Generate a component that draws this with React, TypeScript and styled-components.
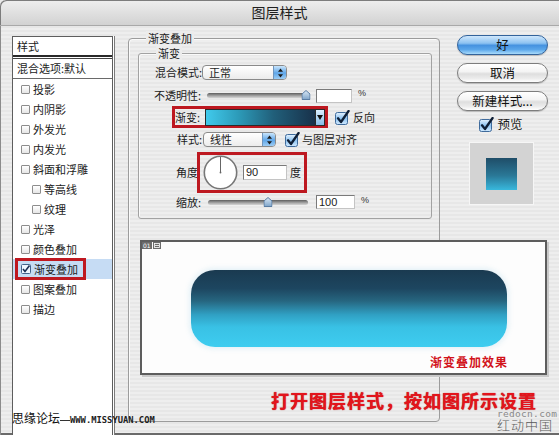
import React from "react";
import styled, { createGlobalStyle } from "styled-components";

const FONT = `"Noto Sans CJK SC", "Noto Sans", sans-serif`;

const Global = createGlobalStyle`
  html, body { margin: 0; padding: 0; background: #e9e9e9; }
  body { font-family: ${FONT}; }
  * { box-sizing: border-box; }
`;

const Window = styled.div`
  position: relative;
  width: 559px;
  height: 435px;
  overflow: hidden;
  display: flex;
  flex-direction: column;
  background: repeating-linear-gradient(to bottom, #eeeeee 0 2px, #e7e7e7 2px 4px);
  box-shadow: inset 1px 0 0 #8c8c8c, inset 0 -2px 0 #6a6a6a;
  border-top-left-radius: 6px;
  font-family: ${FONT};
  color: #1b1b1b;
  font-size: 11px;
  line-height: 1;
`;

const TitleBar = styled.div`
  height: 26px;
  flex: none;
  display: flex;
  align-items: center;
  justify-content: center;
  background: linear-gradient(#eeeeee, #d2d2d2);
  border-bottom: 1px solid #a9a9a9;
  border-top-left-radius: 6px;
  box-shadow: inset 1px 1px 0 #7c7c7c;
  font-size: 14px;
  color: #202020;
  padding-bottom: 1px;
`;

const Body = styled.div`
  flex: 1;
  display: flex;
  align-items: flex-start;
  padding: 10px 0 0 12px;
`;

/* ---------- left list ---------- */
const StyleList = styled.div`
  width: 101px;
  height: 420px;
  flex: none;
  background: #fff;
  border: 1px solid #5e5e5e;
  border-bottom: none;
  box-shadow: 1px 0 0 #fff, 2px 0 0 #7a7a7a;
  display: flex;
  flex-direction: column;
`;

const ListHeader = styled.div`
  height: 20px;
  padding-left: 4px;
  display: flex;
  align-items: center;
  border-bottom: 2px solid #2a2a2a;
  font-size: 11px;
`;

const ListBlend = styled.div`
  margin-top: 1px;
  height: 21px;
  padding-left: 4px;
  display: flex;
  align-items: center;
  border-top: 1px solid #444;
  border-bottom: 1px solid #6a6a6a;
`;

const ListItem = styled.div<{ $selected?: boolean; $indent?: boolean }>`
  height: 20px;
  display: flex;
  align-items: center;
  padding-left: ${(p) => (p.$indent ? 16 : 5)}px;
  background: ${(p) => (p.$selected ? "#c6dcf4" : "transparent")};
`;

const ItemInner = styled.span<{ $marked?: boolean }>`
  display: inline-flex;
  align-items: center;
  gap: 3px;
  height: 16px;
  padding: 0 5px 0 3px;
  outline: ${(p) => (p.$marked ? "3px solid #bf1820" : "none")};
`;

const SmallBox = styled.span`
  width: 9px;
  height: 9px;
  border: 1px solid #8d8d8d;
  border-radius: 1px;
  background: linear-gradient(#ffffff, #e6e6e6);
  display: inline-block;
`;

/* ---------- group boxes ---------- */
const OuterGroup = styled.div`
  position: relative;
  width: 312px;
  height: 384px;
  margin: 2px 0 0 15px;
  flex: none;
  border: 1px solid #9c9c9c;
  border-radius: 4px;
  box-shadow: inset 1px 1px 0 #fafafa;
  padding: 14px 0 0 9px;
`;

const InnerGroup = styled.div`
  position: relative;
  width: 294px;
  height: 166px;
  border: 1px solid #a2a2a2;
  border-radius: 3px;
  box-shadow: inset 1px 1px 0 #fafafa;
  display: flex;
  flex-direction: column;
`;

const Legend = styled.span<{ $left: number }>`
  position: absolute;
  top: -8px;
  left: ${(p) => p.$left}px;
  padding: 0 2px;
  background: #ececec;
  font-size: 11px;
  line-height: 14px;
`;

const Row = styled.div<{ $pl: number; $mt: number; $h: number }>`
  display: flex;
  align-items: center;
  height: ${(p) => p.$h}px;
  margin-top: ${(p) => p.$mt}px;
  padding-left: ${(p) => p.$pl}px;
`;

const Label = styled.span<{ $w: number; $left?: boolean }>`
  width: ${(p) => p.$w}px;
  flex: none;
  text-align: ${(p) => (p.$left ? "left" : "right")};
  font-size: 11px;
  white-space: nowrap;
`;

const Select = styled.div<{ $w: number; $ml?: number }>`
  width: ${(p) => p.$w}px;
  height: 15px;
  margin-left: ${(p) => p.$ml ?? 0}px;
  border: 1px solid #8a8a8a;
  border-radius: 4px;
  background: linear-gradient(#ffffff, #ececec);
  display: flex;
  align-items: center;
  justify-content: space-between;
  padding-left: 6px;
  font-size: 11px;
  overflow: hidden;
`;

const Stepper = styled.span`
  width: 13px;
  height: 100%;
  background: linear-gradient(#c9e5fc, #5fa6e8 55%, #9ccdf5);
  border-left: 1px solid #6f95bd;
  display: flex;
  align-items: center;
  justify-content: center;
`;

const Track = styled.div<{ $w: number; $ml: number }>`
  position: relative;
  width: ${(p) => p.$w}px;
  height: 5px;
  margin-left: ${(p) => p.$ml}px;
  border-radius: 3px;
  background: linear-gradient(#5d5d5d, #a9a9a9 60%, #d5d5d5);
`;

const Thumb = styled.svg`
  position: absolute;
  top: -3px;
  transform: translateX(-50%);
`;

const NumInput = styled.div<{ $w: number; $ml: number; $h?: number }>`
  width: ${(p) => p.$w}px;
  height: ${(p) => p.$h ?? 14}px;
  margin-left: ${(p) => p.$ml}px;
  border: 1px solid #7a7a7a;
  border-right-color: #c4c4c4;
  border-bottom-color: #c4c4c4;
  background: #fff;
  font-family: "Liberation Sans", Arial, sans-serif;
  font-size: 11px;
  display: flex;
  align-items: center;
  padding-left: 2px;
`;

const Unit = styled.span<{ $ml: number }>`
  margin-left: ${(p) => p.$ml}px;
  font-size: 9px;
  font-family: "Liberation Sans", Arial, sans-serif;
  color: #333;
  align-self: flex-start;
  margin-top: 1px;
`;

const RedFrame = styled.div<{ $h: number }>`
  display: flex;
  align-items: center;
  height: ${(p) => p.$h}px;
  border: 3px solid #bd1820;
  flex: none;
`;

const GradientBar = styled.div`
  width: 110px;
  height: 17px;
  border: 1px solid #2b2b2b;
  border-right: none;
  background: linear-gradient(to right, #40caec 0%, #2c9ab8 30%, #215f7a 62%, #18314a 100%);
`;

const GradArrow = styled.div`
  width: 10px;
  height: 17px;
  border: 1px solid #2b2b2b;
  background: linear-gradient(#dcefff, #86bde9);
  display: flex;
  align-items: center;
  justify-content: center;
`;

const CheckSlot = styled.span<{ $ml: number }>`
  margin-left: ${(p) => p.$ml}px;
  display: flex;
`;

const CheckLabel = styled.span<{ $ml: number; $size?: number }>`
  margin-left: ${(p) => p.$ml}px;
  font-size: ${(p) => p.$size ?? 11}px;
  white-space: nowrap;
`;

const FramePad = styled.span`
  width: 3px;
`;

const Dial = styled.svg`
  margin-left: 3px;
  flex: none;
`;

/* ---------- right column ---------- */
const RightCol = styled.div`
  width: 91px;
  margin: -1px 0 0 17px;
  flex: none;
  display: flex;
  flex-direction: column;
  align-items: center;
  gap: 8px;
`;

const AquaButton = styled.div<{ $primary?: boolean }>`
  width: 91px;
  height: 20px;
  border-radius: 10px;
  border: 1px solid ${(p) => (p.$primary ? "#33639b" : "#7d7d7d")};
  background: ${(p) =>
    p.$primary
      ? "linear-gradient(#cfe7fc 0%, #8cc2f1 40%, #4592e0 52%, #5aa6ea 75%, #a9dbfb 100%)"
      : "linear-gradient(#ffffff 0%, #f4f4f4 42%, #dedede 55%, #ececec 80%, #ffffff 100%)"};
  box-shadow: 0 1px 1px rgba(0, 0, 0, 0.2);
  display: flex;
  align-items: center;
  justify-content: center;
  font-size: 12.5px;
  color: #111;
`;

const PreviewCheck = styled.div`
  display: flex;
  align-items: center;
  margin-top: -2px;
  height: 15px;
  margin-left: -3px;
`;

const Swatch = styled.div`
  width: 65px;
  height: 63px;
  margin-top: 2px;
  margin-left: -2px;
  background: #d3d3d3;
  border: 1px solid #f6f6f6;
  display: flex;
  align-items: center;
  justify-content: center;
`;

const SwatchInner = styled.div`
  width: 31px;
  height: 32px;
  background: linear-gradient(#1f4d68, #2a7897 55%, #38b8dd);
`;

/* ---------- overlays (pasted annotation images) ---------- */
const PreviewShot = styled.div`
  position: absolute;
  left: 140px;
  top: 240px;
  width: 407px;
  height: 135px;
  border: 2px solid #5d5d5d;
  background: #fdfdfd;
  box-shadow: 2px 2px 0 #c9c9c9;
  display: flex;
  flex-direction: column;
  align-items: flex-start;
  padding: 28px 0 0 49px;
`;

const ShotTag = styled.div`
  position: absolute;
  left: 0;
  top: 0;
  height: 7px;
  display: flex;
  gap: 1px;
`;

const TagCell = styled.span`
  background: #6c6c6c;
  color: #fff;
  font-family: "DejaVu Sans", sans-serif;
  font-size: 6px;
  line-height: 7px;
  padding: 0 1px;
  display: flex;
  align-items: center;
`;

const GlossButton = styled.div`
  width: 316px;
  height: 77px;
  border-radius: 24px;
  background: linear-gradient(
    to bottom,
    #1a3a50 0%,
    #1d4660 24%,
    #26657f 40%,
    #30a0c3 58%,
    #39c1e5 74%,
    #3ecdf0 100%
  );
  box-shadow: 0 0 5px 2px rgba(225, 240, 246, 0.9);
`;

const ShotCaption = styled.div`
  margin-top: 9px;
  align-self: flex-start;
  margin-left: 239px;
  font-size: 12px;
  font-weight: 700;
  letter-spacing: 1px;
  color: #d2131b;
`;

const Caption = styled.div`
  position: absolute;
  left: 271px;
  top: 392px;
  font-size: 18px;
  line-height: 17px;
  font-weight: 700;
  letter-spacing: 1px;
  color: #e3141c;
  text-shadow: 0 0 1px #a00;
  white-space: nowrap;
`;

const MarkRight = styled.div`
  position: absolute;
  left: 497px;
  top: 410px;
  display: flex;
  flex-direction: column;
  align-items: flex-start;
  color: #666;
`;

const MarkSite = styled.span`
  font-family: "DejaVu Sans Mono", monospace;
  font-size: 9.5px;
  line-height: 8px;
  color: #8a8a8a;
  letter-spacing: 0.3px;
`;

const MarkName = styled.span`
  font-size: 13px;
  line-height: 14px;
  font-weight: 300;
  color: #5a5a5a;
  letter-spacing: 1px;
`;

const MarkLeft = styled.div`
  position: absolute;
  left: 12px;
  top: 412px;
  display: flex;
  align-items: center;
  color: #111;
`;

const MarkLeftName = styled.span`
  font-size: 12px;
`;

const MarkRule = styled.span`
  width: 10px;
  height: 1px;
  background: #333;
  margin-top: 5px;
`;

const MarkLeftUrl = styled.span`
  font-family: "DejaVu Sans Mono", monospace;
  font-weight: 700;
  font-size: 8.8px;
  text-transform: uppercase;
  margin-top: 4px;
  color: #222;
`;

/* ---------- small drawings ---------- */
const SmallCheck = () => (
  <svg width="10" height="10" viewBox="0 0 10 10" style={{ flex: "none" }}>
    <rect x="0.5" y="0.5" width="9" height="9" rx="1" fill="#eef5ff" stroke="#42638c" />
    <path d="M2 5 L4 7.5 L8.5 1.5" fill="none" stroke="#1b2f55" strokeWidth="1.6" />
  </svg>
);

const AquaCheck = ({ id }: { id: string }) => (
  <svg width="15" height="15" viewBox="0 0 15 15" style={{ flex: "none" }}>
    <defs>
      <linearGradient id={id} x1="0" y1="0" x2="0" y2="1">
        <stop offset="0" stopColor="#e6f3ff" />
        <stop offset="0.5" stopColor="#8ec3f1" />
        <stop offset="1" stopColor="#d2eaff" />
      </linearGradient>
    </defs>
    <rect x="0.5" y="2.5" width="12" height="12" rx="2" fill={`url(#${id})`} stroke="#3f6b9c" />
    <path d="M3 8.3 L6 12 L13.6 1" fill="none" stroke="#0f1f36" strokeWidth="2.3" strokeLinecap="round" strokeLinejoin="round" />
  </svg>
);

const StepArrows = () => (
  <svg width="7" height="10" viewBox="0 0 7 10">
    <path d="M3.5 0.5 L6 3.8 L1 3.8 Z" fill="#1a1a1a" />
    <path d="M3.5 9.5 L6 6.2 L1 6.2 Z" fill="#1a1a1a" />
  </svg>
);

const ThumbShape = ({ left }: { left: string }) => (
  <Thumb width="9" height="10" viewBox="0 0 9 10" style={{ left }}>
    <defs>
      <linearGradient id="thumbg" x1="0" y1="0" x2="0" y2="1">
        <stop offset="0" stopColor="#dbe9f6" />
        <stop offset="1" stopColor="#7ea4c9" />
      </linearGradient>
    </defs>
    <path d="M4.5 0.5 L8.5 4 L8.5 9.5 L0.5 9.5 L0.5 4 Z" fill="url(#thumbg)" stroke="#5a7da3" />
  </Thumb>
);

const DownTri = () => (
  <svg width="6" height="5" viewBox="0 0 6 5">
    <path d="M0 0 L6 0 L3 5 Z" fill="#111" />
  </svg>
);

const listItems: { name: string; indent?: boolean; checked?: boolean }[] = [
  { name: "投影" },
  { name: "内阴影" },
  { name: "外发光" },
  { name: "内发光" },
  { name: "斜面和浮雕" },
  { name: "等高线", indent: true },
  { name: "纹理", indent: true },
  { name: "光泽" },
  { name: "颜色叠加" },
  { name: "渐变叠加", checked: true },
  { name: "图案叠加" },
  { name: "描边" },
];

export default function App() {
  return (
    <>
      <Global />
      <Window>
        <TitleBar>图层样式</TitleBar>
        <Body>
          <StyleList>
            <ListHeader>样式</ListHeader>
            <ListBlend>混合选项:默认</ListBlend>
            {listItems.map((it) => (
              <ListItem key={it.name} $indent={it.indent} $selected={it.checked}>
                <ItemInner $marked={it.checked}>
                  {it.checked ? <SmallCheck /> : <SmallBox />}
                  {it.name}
                </ItemInner>
              </ListItem>
            ))}
          </StyleList>

          <OuterGroup>
            <Legend $left={17}>渐变叠加</Legend>
            <InnerGroup>
              <Legend $left={17}>渐变</Legend>

              <Row $pl={16} $mt={11} $h={15}>
                <Label $w={46}>混合模式:</Label>
                <Select $w={85} $ml={1}>
                  正常
                  <Stepper>
                    <StepArrows />
                  </Stepper>
                </Select>
              </Row>

              <Row $pl={14} $mt={8} $h={15}>
                <Label $w={48}>不透明性:</Label>
                <Track $w={100} $ml={6}>
                  <ThumbShape left="99%" />
                </Track>
                <NumInput $w={36} $ml={9} />
                <Unit $ml={6}>%</Unit>
              </Row>

              <Row $pl={33} $mt={3} $h={22}>
                <RedFrame $h={22}>
                  <Label $w={30} $left>
                    渐变:
                  </Label>
                  <GradientBar />
                  <GradArrow>
                    <DownTri />
                  </GradArrow>
                </RedFrame>
                <CheckSlot $ml={7}>
                  <AquaCheck id="ck1" />
                </CheckSlot>
                <CheckLabel $ml={3}>反向</CheckLabel>
              </Row>

              <Row $pl={37} $mt={4} $h={15}>
                <Label $w={26}>样式:</Label>
                <Select $w={73} $ml={1}>
                  线性
                  <Stepper>
                    <StepArrows />
                  </Stepper>
                </Select>
                <CheckSlot $ml={9}>
                  <AquaCheck id="ck2" />
                </CheckSlot>
                <CheckLabel $ml={2}>与图层对齐</CheckLabel>
              </Row>

              <Row $pl={37} $mt={5} $h={41}>
                <Label $w={21} $left>
                  角度
                </Label>
                <RedFrame $h={41}>
                  <Dial width="35" height="35" viewBox="0 0 35 35">
                    <circle cx="17.5" cy="17.5" r="16.2" fill="#fff" stroke="#777" strokeWidth="1.6" />
                    <line x1="17.5" y1="17.5" x2="17.5" y2="2" stroke="#666" strokeWidth="1" />
                    <circle cx="17.5" cy="17.5" r="0.9" fill="#666" />
                  </Dial>
                  <NumInput $w={44} $ml={5} $h={15}>
                    90
                  </NumInput>
                  <CheckLabel $ml={3}>度</CheckLabel>
                  <FramePad />
                </RedFrame>
              </Row>

              <Row $pl={37} $mt={2} $h={14}>
                <Label $w={28} $left>
                  缩放:
                </Label>
                <Track $w={100} $ml={4}>
                  <ThumbShape left="60%" />
                </Track>
                <NumInput $w={39} $ml={8}>
                  100
                </NumInput>
                <Unit $ml={6}>%</Unit>
              </Row>
            </InnerGroup>
          </OuterGroup>

          <RightCol>
            <AquaButton $primary>好</AquaButton>
            <AquaButton>取消</AquaButton>
            <AquaButton>新建样式...</AquaButton>
            <PreviewCheck>
              <AquaCheck id="ck3" />
              <CheckLabel $ml={3} $size={12.5}>
                预览
              </CheckLabel>
            </PreviewCheck>
            <Swatch>
              <SwatchInner />
            </Swatch>
          </RightCol>
        </Body>

        <PreviewShot>
          <ShotTag>
            <TagCell>01</TagCell>
            <TagCell>
              <svg width="6" height="5" viewBox="0 0 6 5">
                <rect x="0.5" y="0.5" width="5" height="4" fill="none" stroke="#fff" strokeWidth="0.8" />
                <line x1="1" y1="2.5" x2="5" y2="2.5" stroke="#fff" strokeWidth="0.8" />
              </svg>
            </TagCell>
          </ShotTag>
          <GlossButton />
          <ShotCaption>渐变叠加效果</ShotCaption>
        </PreviewShot>

        <Caption>打开图层样式，按如图所示设置</Caption>

        <MarkLeft>
          <MarkLeftName>思缘论坛</MarkLeftName>
          <MarkRule />
          <MarkLeftUrl>www.missyuan.com</MarkLeftUrl>
        </MarkLeft>

        <MarkRight>
          <MarkSite>redocn.com</MarkSite>
          <MarkName>红动中国</MarkName>
        </MarkRight>
      </Window>
    </>
  );
}
